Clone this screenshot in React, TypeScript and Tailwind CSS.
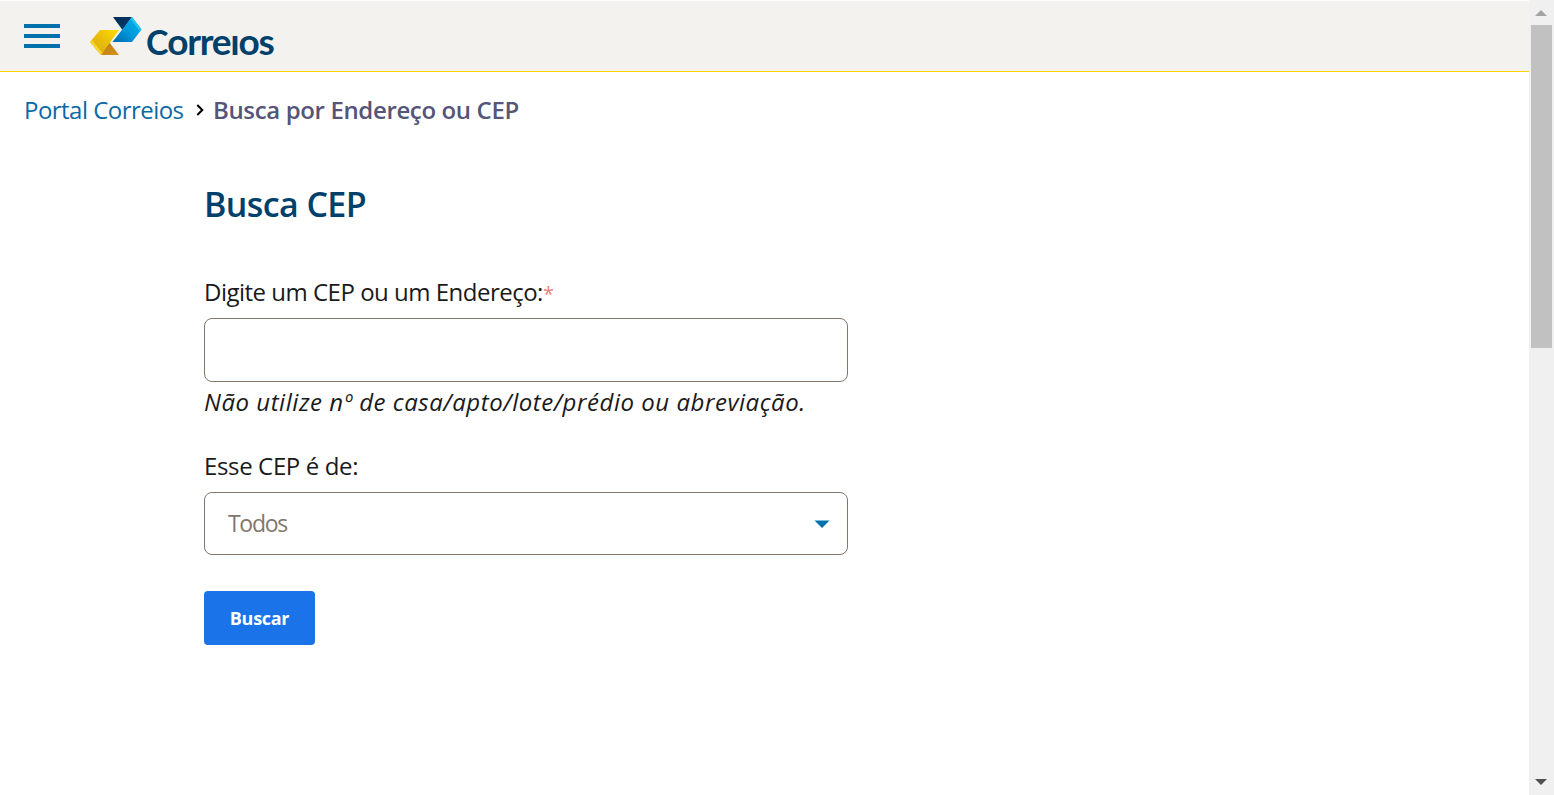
import React from "react";

function Logo() {
  return (
    <a className="ml-[30px] flex h-[46px] items-start" aria-label="Correios">
      <svg width="52" height="39" viewBox="0 0 52 39" className="mt-[3px] shrink-0">
        <defs>
          <linearGradient id="navy" x1="0" y1="0" x2="1" y2="1">
            <stop offset="0" stopColor="#002c57" />
            <stop offset="1" stopColor="#003d6d" />
          </linearGradient>
          <linearGradient id="blue" x1="1" y1="0" x2="0" y2="1">
            <stop offset="0" stopColor="#00b5ee" />
            <stop offset="0.5" stopColor="#009bdc" />
            <stop offset="1" stopColor="#0068ab" />
          </linearGradient>
          <linearGradient id="gold" x1="1" y1="0" x2="0" y2="1">
            <stop offset="0" stopColor="#ffdc00" />
            <stop offset="0.5" stopColor="#e8bd0c" />
            <stop offset="1" stopColor="#d8a60c" />
          </linearGradient>
          <linearGradient id="brown" x1="0" y1="0" x2="1" y2="1">
            <stop offset="0" stopColor="#b67813" />
            <stop offset="1" stopColor="#d8951b" />
          </linearGradient>
        </defs>
        <path d="M23 1H42L32.5 14Z" fill="url(#navy)" />
        <path d="M42 1L51.5 13.5L42 26H22.5Z" fill="url(#blue)" />
        <path d="M42 1L51.5 13.5L50 15.5L40.5 3Z" fill="#24c3ef" />
        <path d="M19 26L29 39H11Z" fill="url(#brown)" />
        <path d="M10 14H29L11 39L0 26Z" fill="url(#gold)" />
        <path d="M0 26L1.8 23.8L12.5 37L11 39Z" fill="#f4d52c" />
      </svg>
      <span className="ml-[4px] flex items-baseline whitespace-nowrap font-['Lato',sans-serif] font-bold leading-[56px] tracking-[-1.25px] text-[#00416b]">
        <span className="text-[34px]">C</span>
        <span className="text-[37px]">orreıos</span>
      </span>
    </a>
  );
}

function Header() {
  return (
    <header className="mt-px flex h-[71px] items-start border-b border-[#ffd400] bg-[#f4f2ee] pl-6 pt-3">
      <button aria-label="Menu" className="mt-[11px] flex w-9 shrink-0 flex-col gap-[6px]">
        <span className="h-1 w-full bg-[#0071ad]" />
        <span className="h-1 w-full bg-[#0071ad]" />
        <span className="h-1 w-full bg-[#0071ad]" />
      </button>
      <Logo />
    </header>
  );
}

function Scrollbar() {
  return (
    <div className="flex h-full w-[25px] shrink-0 flex-col items-center bg-[#f0f0f0]">
      <div className="flex h-[25px] shrink-0 items-start pr-px pt-[10px]">
        <svg width="12" height="6" viewBox="0 0 12 6"><path d="M6 0L12 6H0Z" fill="#a3a3a3" /></svg>
      </div>
      <div className="h-[323px] w-[21px] shrink-0 bg-[#c1c1c1]" />
      <div className="mt-auto h-[16px] pr-px">
        <svg width="12" height="6" viewBox="0 0 12 6"><path d="M0 0H12L6 6Z" fill="#505050" /></svg>
      </div>
    </div>
  );
}

export default function App() {
  return (
    <div className="flex h-[795px] w-full overflow-hidden bg-white font-['Open_Sans',sans-serif] text-2xl text-[#1a1a1a]">
      <div className="min-w-0 flex-1">
        <Header />
        <nav className="flex h-[76px] items-center whitespace-nowrap pl-6">
          <a className="w-[160px] tracking-[-0.53px] text-[#0a69a5]">Portal Correios</a>
          <svg width="8" height="12" viewBox="0 0 8 12" className="ml-[12px] mr-[9px]">
            <path d="M1.3 1L6.3 6L1.3 11" fill="none" stroke="#000" strokeWidth="2" />
          </svg>
          <b className="font-semibold tracking-[-0.36px] text-[#555479]">Busca por Endereço ou CEP</b>
        </nav>
        <main className="ml-[204px] flex w-[644px] flex-col whitespace-nowrap">
          <h1 className="mt-[32px] h-[48px] text-[34px] font-semibold leading-[48px] tracking-[-0.6px] text-[#00416b]">Busca CEP</h1>
          <label className="mt-[46px] h-9 leading-9 tracking-[-0.5px]">Digite um CEP ou um Endereço:<span className="text-xl text-[#ef7f7f]">*</span></label>
          <input className="mt-[8px] h-[64px] rounded-lg border border-[#83766b] px-6 outline-none" />
          <em className="mt-[2px] h-9 leading-9 tracking-[0.53px]">Não utilize nº de casa/apto/lote/prédio ou abreviação.</em>
          <label className="mt-[28px] h-9 leading-9 tracking-[-0.36px]">Esse CEP é de:</label>
          <div className="mt-[8px] flex h-[63px] items-center justify-between rounded-lg border border-[#83766b] pl-[23px] pr-[17px] text-[#83766b]">
            <span className="pb-px text-[23px] tracking-[-1.3px]">Todos</span>
            <svg width="16" height="8" viewBox="0 0 16 8" className="mt-px"><path d="M0.5 0.5H15.5L8 8Z" fill="#0071ad" /></svg>
          </div>
          <button className="mt-9 h-[54px] w-[111px] rounded-[4px] bg-[#1a73e8] text-lg font-bold tracking-[-0.3px] text-white">Buscar</button>
        </main>
      </div>
      <Scrollbar />
    </div>
  );
}
